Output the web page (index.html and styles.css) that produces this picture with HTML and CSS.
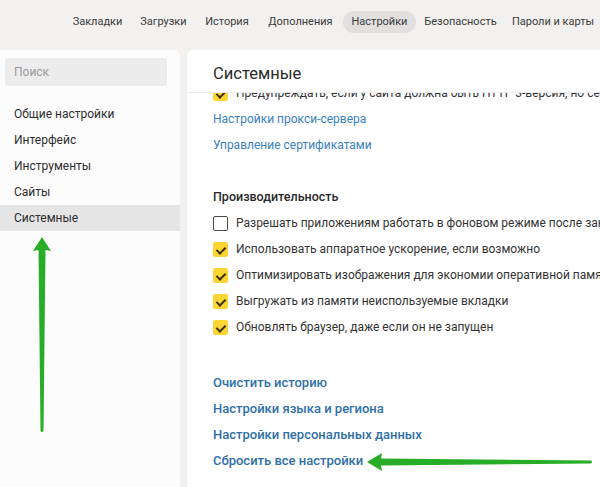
FILE: index.html
```html
<!DOCTYPE html>
<html lang="ru">
<head>
<meta charset="utf-8">
<link rel="stylesheet" href="styles.css">
</head>
<body>
<div class="page">
  <nav class="topbar">
    <span class="tab">Закладки</span>
    <span class="tab">Загрузки</span>
    <span class="tab">История</span>
    <span class="tab">Дополнения</span>
    <span class="tab active">Настройки</span>
    <span class="tab">Безопасность</span>
    <span class="tab">Пароли и карты</span>
  </nav>
  <div class="main">
    <aside class="sidebar">
      <div class="search">Поиск</div>
      <ul class="menu">
        <li>Общие настройки</li>
        <li>Интерфейс</li>
        <li>Инструменты</li>
        <li>Сайты</li>
        <li class="current">Системные</li>
      </ul>
    </aside>
    <section class="content">
      <header class="content-head">Системные</header>
      <div class="scroll">
        <div class="row clipped"><span class="cb on"></span>Предупреждать, если у сайта должна быть HTTP 3-версия, но се не используется</div>
        <div class="row link">Настройки прокси-сервера</div>
        <div class="row link">Управление сертификатами</div>
        <div class="row title">Производительность</div>
        <div class="row"><span class="cb"></span>Разрешать приложениям работать в фоновом режиме после закрытия браузера</div>
        <div class="row"><span class="cb on"></span>Использовать аппаратное ускорение, если возможно</div>
        <div class="row"><span class="cb on"></span>Оптимизировать изображения для экономии оперативной памяти</div>
        <div class="row"><span class="cb on"></span>Выгружать из памяти неиспользуемые вкладки</div>
        <div class="row"><span class="cb on"></span>Обновлять браузер, даже если он не запущен</div>
        <div class="actions">
          <div class="row blink">Очистить историю</div>
          <div class="row blink">Настройки языка и региона</div>
          <div class="row blink">Настройки персональных данных</div>
          <div class="row blink">Сбросить все настройки</div>
        </div>
      </div>
    </section>
  </div>
  <svg class="arrow arrow-up" width="24" height="200" viewBox="0 0 24 200">
    <path d="M12 2 L21 16 L15.5 15 L13.5 196 Q12 198 10.5 196 L8.5 15 L3 16 Z" fill="#27ad27"/>
  </svg>
  <svg class="arrow arrow-left" width="232" height="24" viewBox="0 0 232 24">
    <path d="M2 12 L17 3 L16 8.5 L226 10.5 Q228 12 226 13.5 L16 15.5 L17 21 Z" fill="#27ad27"/>
  </svg>
</div>
</body>
</html>
```
FILE: styles.css
```css
* { box-sizing: border-box; }
html, body { margin: 0; padding: 0; }
body {
  width: 600px;
  height: 487px;
  overflow: hidden;
  background: #f2f1f0;
  font-family: Roboto, "Noto Sans", sans-serif;
  color: #333;
}
.page { position: relative; width: 600px; height: 487px; overflow: hidden; }
.topbar {
  height: 50px;
  display: flex;
  align-items: flex-start;
  padding: 11px 0 0 64px;
  white-space: nowrap;
}
.tab {
  flex: none;
  font-size: 11px;
  line-height: 22px;
  height: 22px;
  text-align: center;
  color: #3a3a3a;
  border-radius: 11px;
}
.tab:nth-child(1) { width: 67px; }
.tab:nth-child(2) { width: 65px; }
.tab:nth-child(3) { width: 62px; }
.tab:nth-child(4) { width: 85px; }
.tab:nth-child(5) { width: 73px; }
.tab:nth-child(6) { width: 89px; }
.tab:nth-child(7) { width: 96px; }
.tab.active { background: #e1e0df; }
.main {
  display: flex;
  gap: 7px;
  height: 437px;
}
.sidebar {
  width: 180px;
  flex: none;
  background: #fcfcfc;
  border-top-right-radius: 6px;
  padding-top: 8px;
}
.search {
  margin: 0 13px 0 5px;
  height: 28px;
  background: #ececec;
  border-radius: 3px;
  font-size: 12px;
  line-height: 29px;
  padding-left: 9px;
  color: #9a9a9a;
}
.menu { list-style: none; margin: 15px 0 0; padding: 0; }
.menu li {
  height: 26px;
  line-height: 27px;
  font-size: 12px;
  padding-left: 14px;
  color: #2e2e2e;
}
.menu li.current { background: #e5e5e5; }
.content {
  flex: 1;
  background: #fff;
  border-top-left-radius: 6px;
  overflow: hidden;
  white-space: nowrap;
}
.content-head {
  height: 43px;
  line-height: 48px;
  padding-left: 26px;
  font-size: 16.5px;
  color: #2a2a2a;
  border-bottom: 1px solid #ececec;
}
.scroll { overflow: hidden; height: 394px; padding-left: 26px; }
.row {
  height: 26px;
  line-height: 26px;
  font-size: 12px;
  display: flex;
  align-items: center;
  color: #333;
}
.row.clipped { margin-top: -13px; height: 26px; }
.row.link { color: #3b7fbf; }
.row.title { margin-top: 26px; font-weight: 500; font-size: 12.5px; color: #2a2a2a; }
.cb {
  flex: none;
  width: 15px;
  height: 15px;
  border: 1px solid #4a4a4a;
  border-radius: 2px;
  margin-right: 8px;
  position: relative;
  background: #fff;
}
.cb.on { background: #fcd534; border-color: #fcd534; }
.cb.on::after {
  content: "";
  position: absolute;
  left: 4px;
  top: 2px;
  width: 4px;
  height: 7px;
  border: solid #3a2f00;
  border-width: 0 2px 2px 0;
  transform: rotate(45deg);
}
.actions { margin-top: 30px; }
.row.blink { color: #2f6fa8; font-weight: 500; font-size: 13px; }
.arrow { position: absolute; }
.arrow-up { left: 30px; top: 235px; }
.arrow-left { left: 365px; top: 450px; }
```
